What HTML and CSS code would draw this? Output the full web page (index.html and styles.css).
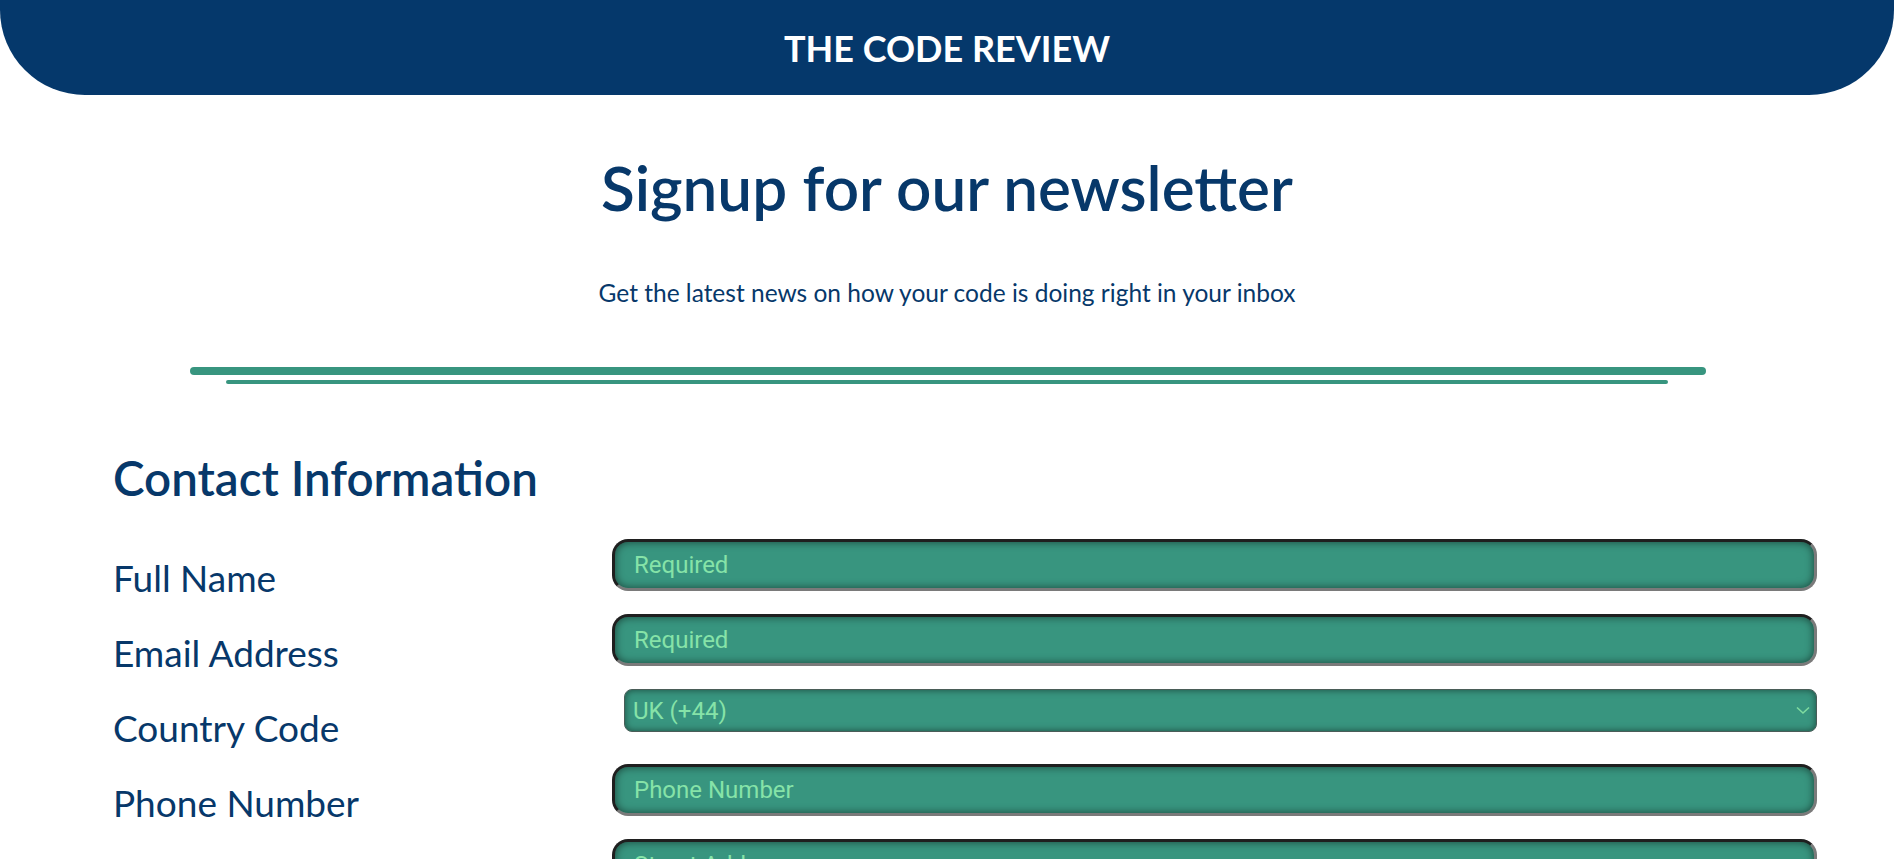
FILE: index.html
```html
<!DOCTYPE html>
<html lang="en">
<head>
<meta charset="utf-8">
<title>The Code Review - Newsletter</title>
<link rel="stylesheet" href="styles.css">
</head>
<body>
<header class="topbar">
  <h1 class="brand">THE CODE REVIEW</h1>
</header>
<main class="page">
  <section class="intro">
    <h2 class="intro-title">Signup for our newsletter</h2>
    <p class="intro-text">Get the latest news on how your code is doing right in your inbox</p>
  </section>
  <div class="rule rule-thick"></div>
  <div class="rule rule-thin"></div>
  <form class="signup">
    <h3 class="section-title">Contact Information</h3>
    <div class="row">
      <label class="label" for="name">Full Name</label>
      <input class="field" id="name" type="text" placeholder="Required">
    </div>
    <div class="row">
      <label class="label" for="email">Email Address</label>
      <input class="field" id="email" type="email" placeholder="Required">
    </div>
    <div class="row">
      <label class="label" for="cc">Country Code</label>
      <div class="select-wrap">
        <select class="select" id="cc">
          <option>UK (+44)</option>
          <option>US (+1)</option>
        </select>
        <svg class="chev" width="14" height="9" viewBox="0 0 14 9"><path d="M1 1.5 L7 7 L13 1.5" fill="none" stroke="#7fdca0" stroke-width="1.6"/></svg>
      </div>
    </div>
    <div class="row">
      <label class="label" for="phone">Phone Number</label>
      <input class="field" id="phone" type="tel" placeholder="Phone Number">
    </div>
    <div class="row">
      <label class="label" for="street">Street Address</label>
      <input class="field" id="street" type="text" placeholder="Street Address">
    </div>
  </form>
</main>
</body>
</html>
```
FILE: styles.css
```css
* { box-sizing: border-box; }
html, body { margin: 0; padding: 0; background: #ffffff; }
body {
  font-family: Lato, "Noto Sans", sans-serif;
  color: #07386a;
  overflow: hidden;
}
.topbar {
  height: 95px;
  background: #05386b;
  border-radius: 0 0 85px 85px;
  display: flex;
  align-items: center;
  justify-content: center;
}
.brand {
  margin: 0;
  color: #ffffff;
  font-size: 36px;
  font-weight: 700;
  letter-spacing: 0;
}
.page { padding: 0; }
.intro { text-align: center; }
.intro-title {
  margin: 0;
  padding-top: 52px;
  font-size: 62px;
  font-weight: 600;
  line-height: 80px;
  color: #07386a;
}
.intro-text {
  margin: 0;
  padding-top: 51px;
  font-size: 24.5px;
  line-height: 30px;
}
.rule { background: #38957f; }
.rule-thick {
  margin: 59px 188px 0 190px;
  height: 8px;
  border-radius: 4px;
}
.rule-thin {
  margin: 5px 226px 0 226px;
  height: 4px;
  border-radius: 2px;
}
.signup { padding: 0 77px 0 113px; }
.section-title {
  margin: 0;
  padding-top: 66px;
  font-size: 47.5px;
  font-weight: 600;
  line-height: 56px;
  color: #07386a;
}
.row {
  display: flex;
  align-items: flex-start;
  height: 75px;
}
.label {
  flex: 0 0 499px;
  font-size: 37px;
  font-weight: 400;
  line-height: 42px;
  padding-top: 18px;
  color: #07386a;
}
.signup .row:nth-of-type(1) { margin-top: 33px; }
.field {
  flex: 1;
  height: 52px;
  border-width: 3px;
  border-style: solid;
  border-color: #1f1f1f #7a7a7a #7a7a7a #1f1f1f;
  border-radius: 16px;
  background: #38957f;
  box-shadow: inset 0 0 8px rgba(0, 0, 0, 0.55);
  padding: 0 19px;
  font-family: Roboto, "Noto Sans", sans-serif;
  font-size: 24px;
  color: #86e3a8;
  outline: none;
}
.field::placeholder { color: #86e3a8; opacity: 1; }
.select-wrap {
  flex: 1;
  position: relative;
  margin-left: 12px;
  height: 43px;
}
.select {
  width: 100%;
  height: 43px;
  appearance: none;
  -webkit-appearance: none;
  border: 1px solid #4a5d58;
  border-radius: 8px;
  background: #38957f;
  box-shadow: inset 0 0 7px rgba(0, 0, 0, 0.5);
  padding: 0 8px;
  font-family: Roboto, "Noto Sans", sans-serif;
  font-size: 24px;
  color: #86e3a8;
  outline: none;
}
.chev {
  position: absolute;
  right: 7px;
  top: 17px;
  pointer-events: none;
}
```
